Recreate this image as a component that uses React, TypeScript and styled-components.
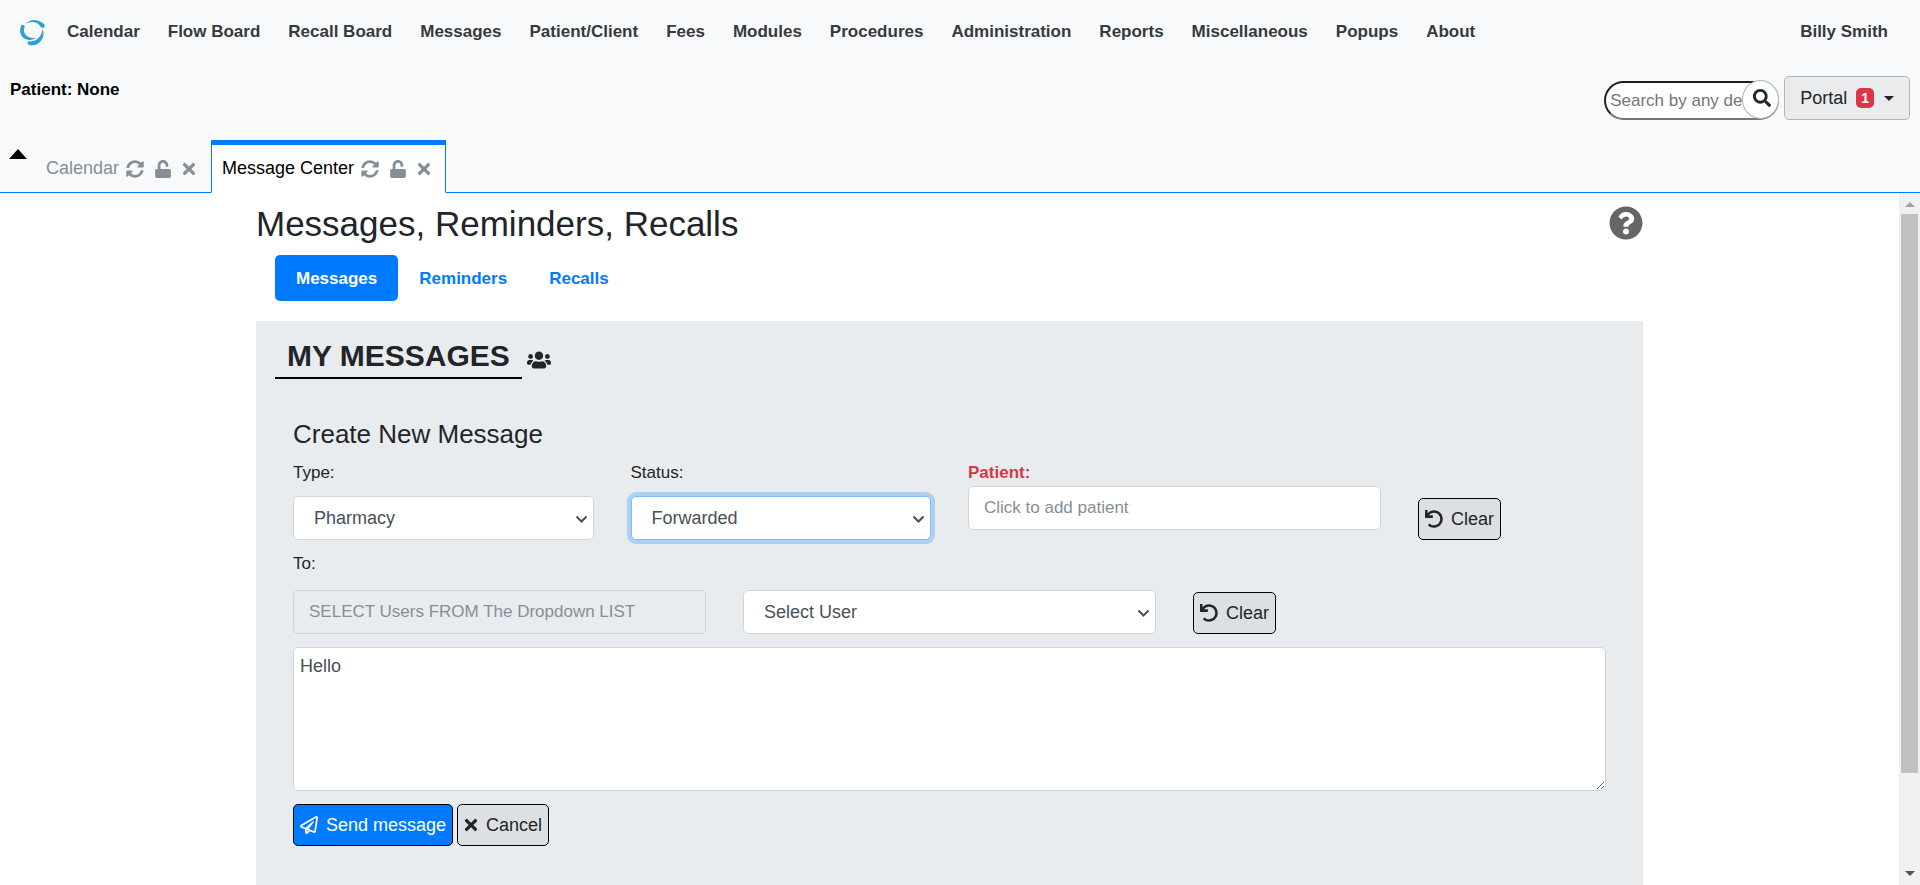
import React from 'react';
import styled, { createGlobalStyle, css } from 'styled-components';
import { FaSyncAlt, FaUnlock, FaTimes, FaSearch, FaQuestionCircle, FaUsers, FaUndo, FaRegPaperPlane } from 'react-icons/fa';

const Global = createGlobalStyle`
  *, *::before, *::after { box-sizing: border-box; }
  html, body, #root { height: 100%; }
  body {
    margin: 0;
    font: 18px/27px "Liberation Sans", Arial, sans-serif;
    color: #212529;
    background: #fff;
  }
  h1, h2, h3, p { margin: 0; font-weight: 400; }
  a { text-decoration: none; }
  button, input, select, textarea { font: inherit; margin: 0; }
`;

const Page = styled.div`
  height: 100vh;
  display: flex;
  flex-direction: column;
  overflow: hidden;
`;
const Header = styled.header`
  flex: none;
  background: #f8f9fa;
`;
const Nav = styled.nav`
  display: flex;
  align-items: center;
  gap: 21px;
  padding: 16px 32px 16px 19px;
`;
const NavItems = styled.div`
  display: flex;
  gap: 28px;
`;
const NavLink = styled.a`
  color: #343a40;
  font-size: 17px;
  font-weight: 700;
  line-height: 32px;
`;
const UserLink = styled(NavLink)`
  margin-left: auto;
`;
const PatientBar = styled.div`
  display: flex;
  justify-content: space-between;
  align-items: flex-start;
  padding: 12px 10px 0;
  height: 76px;
`;
const PatientName = styled.p`
  color: #000;
  font-size: 17px;
  font-weight: 700;
`;
const Tools = styled.div`
  display: flex;
  gap: 5px;
`;
const SearchForm = styled.form`
  display: flex;
  position: relative;
  width: 175px;
  height: 39px;
  margin-top: 5px;
`;
const SearchInput = styled.input`
  width: 100%;
  padding: 1px 34px 1px 4px;
  border: 2px inset #767676;
  border-radius: 20px;
  background: #fff;
  font-size: 17px;
  &::placeholder { color: #757575; opacity: 1; }
`;
const SearchButton = styled.button`
  position: absolute;
  top: -1px;
  right: 0;
  width: 37px;
  height: 39px;
  display: grid;
  place-items: center;
  padding: 0 0 3px 2px;
  border: 1px solid #adb5bd;
  border-radius: 50%;
  background: #fff;
  color: #212529;
`;
const PortalButton = styled.button`
  display: flex;
  align-items: center;
  height: 44px;
  padding: 0 15px;
  border: 1px solid #adb5bd;
  border-radius: 5px;
  background: #e9ebed;
  color: #212529;
`;
const Badge = styled.span`
  margin: 0 10px 0 9px;
  padding: 0 5px;
  border-radius: 5px;
  background: #dc3545;
  color: #fff;
  font-size: 14px;
  font-weight: 700;
  line-height: 20px;
`;
const Caret = styled.span`
  border: 5px solid transparent;
  border-top: 5px solid;
  border-bottom: 0;
`;
const Tabs = styled.div`
  display: flex;
  align-items: flex-start;
  border-bottom: 1px solid #007bff;
  height: 53px;
`;
const Collapse = styled.button`
  margin: 0 8px 0 9px;
  padding: 9px 0;
  border: 0;
  background: none;
  display: flex;
  &::before {
    content: "";
    border: 9px solid transparent;
    border-bottom: 10px solid #000;
    border-top: 0;
  }
`;
const Tab = styled.div<{ $active?: boolean }>`
  display: flex;
  align-items: center;
  gap: 7px;
  height: 53px;
  padding: 0 14px 0 10px;
  border: 1px solid transparent;
  border-top-width: 5px;
  color: #868e96;
  ${p => p.$active && css`
    border-color: #007bff;
    border-bottom-color: #fff;
    background: #fff;
    color: #000;
  `}
`;
const TabActions = styled.span`
  display: flex;
  gap: 11px;
`;
const TabAction = styled.button`
  display: flex;
  padding: 0;
  border: 0;
  background: none;
  color: #868e96;
`;
const UnlockIcon = styled(FaUnlock)`
  width: 16px;
  height: 18px;
`;
const CloseIcon = styled(FaTimes)`
  width: 14px;
  height: 18px;
`;
const Body = styled.div`
  flex: 1;
  min-height: 0;
  display: flex;
`;
const Content = styled.main`
  flex: 1;
  overflow: hidden;
  padding: 0 18px;
`;
const Container = styled.div`
  max-width: 1387px;
  min-height: 100%;
  margin: 0 auto;
  display: flex;
  flex-direction: column;
`;
const TitleRow = styled.div`
  display: flex;
  justify-content: space-between;
  align-items: flex-start;
  padding-top: 9px;
  height: 62px;
`;
const Title = styled.h1`
  font-size: 35px;
  line-height: 43px;
`;
const Help = styled.a`
  display: flex;
  margin-top: 4px;
  color: #676666;
`;
const Pills = styled.div`
  display: flex;
  padding-left: 19px;
  margin-bottom: 20px;
`;
const Pill = styled.a<{ $active?: boolean }>`
  padding: 10px 21px 9px;
  border-radius: 5px;
  font-size: 17px;
  font-weight: 700;
  color: ${p => (p.$active ? '#fff' : '#007bff')};
  background: ${p => (p.$active ? '#007bff' : 'transparent')};
`;
const Panel = styled.section`
  flex: 1;
  padding: 14px 37px 40px;
  background: #e9ecef;
`;
const PanelHead = styled.div`
  display: flex;
  align-items: center;
  gap: 5px;
  margin: 0 -18px;
`;
const PanelTitle = styled.h2`
  padding: 0 12px;
  border-bottom: 2px solid #000;
  font-size: 30px;
  font-weight: 700;
  line-height: 42px;
`;
const UsersButton = styled.button`
  display: flex;
  padding: 5px 0 0;
  border: 0;
  background: none;
  color: inherit;
`;
const FormTitle = styled.h3`
  margin: 38px 0 8px;
  font-size: 26px;
  line-height: 34px;
`;
const Grid = styled.div`
  display: grid;
  grid-template-columns: repeat(12, 1fr);
  column-gap: 37px;
  & + & { margin-top: 10px; }
`;
const Field = styled.div<{ $span: number; $gap?: number }>`
  grid-column: span ${p => p.$span};
  display: flex;
  flex-direction: column;
  align-items: ${p => (p.$span === 2 ? 'flex-start' : 'stretch')};
  gap: ${p => p.$gap || 0}px;
`;
const ClearField = styled(Field)`
  justify-content: flex-end;
`;
const Label = styled.label<{ $required?: boolean }>`
  ${p => p.$required && 'color: #dc3545; font-weight: 700;'}
  font-size: 17px;
`;
const control = css`
  width: 100%;
  height: 44px;
  border: 1px solid #ced4da;
  border-radius: 5px;
  background-color: #fff;
  color: #495057;
`;
const TextInput = styled.input`
  ${control}
  padding: 0 15px;
  font-size: 17px;
  &::placeholder { color: #868e96; opacity: 1; }
  &:disabled { background: #e9ecef; }
`;
const SelectWrap = styled.span`
  display: block;
  position: relative;
  svg {
    position: absolute;
    right: 6px;
    top: 19px;
    pointer-events: none;
  }
`;
const SelectBox = styled.select<{ $focused?: boolean }>`
  ${control}
  appearance: none;
  padding: 0 20px;
  ${p => p.$focused && 'border-color: #80bdff; box-shadow: 0 0 0 4px rgba(0, 123, 255, .25);'}
`;
const TextArea = styled.textarea`
  ${control}
  display: block;
  height: 144px;
  margin: 13px 0;
  padding: 5px 6px;
`;
const Button = styled.button<{ $primary?: boolean }>`
  display: flex;
  align-items: center;
  gap: 8px;
  height: 42px;
  padding: 0 6px;
  border: 1px solid #000;
  border-radius: 5px;
  background: ${p => (p.$primary ? '#007bff' : '#dde0e3')};
  color: ${p => (p.$primary ? '#fff' : '#212529')};
`;
const Actions = styled.div`
  display: flex;
  gap: 4px;
`;
const Scrollbar = styled.div`
  flex: none;
  width: 21px;
  display: flex;
  flex-direction: column;
  align-items: center;
  padding: 9px 2px;
  background: #f1f1f1;
`;
const Arrow = styled.span<{ $down?: boolean }>`
  border: 5px solid transparent;
  ${p => (p.$down
    ? 'border-top-color: #505050; border-bottom: 0;'
    : 'border-bottom-color: #a3a3a3; border-top: 0;')}
`;
const Track = styled.div`
  flex: 1;
  width: 100%;
  margin: 7px 0;
`;
const Thumb = styled.div`
  height: 86%;
  background: #c1c1c1;
`;

const menu = ['Calendar', 'Flow Board', 'Recall Board', 'Messages', 'Patient/Client', 'Fees', 'Modules',
  'Procedures', 'Administration', 'Reports', 'Miscellaneous', 'Popups', 'About'];

const Logo = () => (
  <svg width="27" height="27" viewBox="0 0 27 27" fill="#2f9fd4" aria-hidden="true">
    <path d="M6.5 5.5C9 2 13 .5 17 1.2c3.500.5 6 2.300 8.500 4.300.5 1.200 0 2.500-.7 3.300-1.300.4-2.300 0-3.300-1C19.500 3.500 12 .8 6.500 5.500z" />
    <path d="M2.500 6C4 5.700 5.500 6 5.800 7.500 3 13 6.500 19.500 17 19.300 12 21.800 7 21.500 4 18.500 1 15.500.2 9.500 2.500 6z" />
    <path d="M9 22.500C17 23 22.500 18.500 23.600 10c2.200 6 .4 12-5.600 15.200-2.500 1.300-6 1.500-8.500.5-1.200-.8-1.300-2.200-.5-3.200z" />
  </svg>
);

const Chevron = () => (
  <svg width="13" height="9" viewBox="0 0 13 9" fill="none" stroke="#495057" strokeWidth="2" aria-hidden="true">
    <path d="M1.5 1.5l5 5 5-5" />
  </svg>
);

const Select = ({ id, value, focused, label }: { id: string; value: string; focused?: boolean; label?: string }) => (
  <SelectWrap>
    <SelectBox id={id} $focused={focused} defaultValue={value} aria-label={label}>
      <option>{value}</option>
    </SelectBox>
    <Chevron />
  </SelectWrap>
);

const PageTab = ({ name, active }: { name: string; active?: boolean }) => (
  <Tab $active={active}>
    <span>{name}</span>
    <TabActions>
      <TabAction aria-label={`Refresh ${name}`}><FaSyncAlt size={18} /></TabAction>
      <TabAction aria-label={`Lock ${name}`}><UnlockIcon /></TabAction>
      <TabAction aria-label={`Close ${name}`}><CloseIcon /></TabAction>
    </TabActions>
  </Tab>
);

export default function App() {
  return (
    <Page>
      <Global />
      <Header>
        <Nav>
          <Logo />
          <NavItems>
            {menu.map(m => <NavLink href="#" key={m}>{m}</NavLink>)}
          </NavItems>
          <UserLink href="#">Billy Smith</UserLink>
        </Nav>
        <PatientBar>
          <PatientName>Patient: None</PatientName>
          <Tools>
            <SearchForm>
              <SearchInput aria-label="Search" placeholder="Search by any demographics" />
              <SearchButton type="button" aria-label="Search"><FaSearch size={18} /></SearchButton>
            </SearchForm>
            <PortalButton>Portal<Badge>1</Badge><Caret /></PortalButton>
          </Tools>
        </PatientBar>
        <Tabs>
          <Collapse aria-label="Collapse" />
          <PageTab name="Calendar" />
          <PageTab name="Message Center" active />
        </Tabs>
      </Header>
      <Body>
        <Content>
          <Container>
            <TitleRow>
              <Title>Messages, Reminders, Recalls</Title>
              <Help href="#" aria-label="Help"><FaQuestionCircle size={34} /></Help>
            </TitleRow>
            <Pills>
              <Pill href="#" $active>Messages</Pill>
              <Pill href="#">Reminders</Pill>
              <Pill href="#">Recalls</Pill>
            </Pills>
            <Panel>
              <PanelHead>
                <PanelTitle>MY MESSAGES</PanelTitle>
                <UsersButton type="button" aria-label="All users"><FaUsers size={24} /></UsersButton>
              </PanelHead>
              <FormTitle>Create New Message</FormTitle>
              <Grid>
                <Field $span={3} $gap={10}>
                  <Label htmlFor="type">Type:</Label>
                  <Select id="type" value="Pharmacy" />
                </Field>
                <Field $span={3} $gap={10}>
                  <Label htmlFor="status">Status:</Label>
                  <Select id="status" value="Forwarded" focused />
                </Field>
                <Field $span={4}>
                  <Label htmlFor="patient" $required>Patient:</Label>
                  <TextInput id="patient" placeholder="Click to add patient" />
                </Field>
                <ClearField $span={2}>
                  <Button type="button"><FaUndo size={18} />Clear</Button>
                </ClearField>
              </Grid>
              <Grid>
                <Field $span={4} $gap={13}>
                  <Label htmlFor="users">To:</Label>
                  <TextInput id="users" placeholder="SELECT Users FROM The Dropdown LIST" disabled />
                </Field>
                <ClearField $span={4}>
                  <Select id="user" value="Select User" label="Select User" />
                </ClearField>
                <ClearField $span={2}>
                  <Button type="button"><FaUndo size={18} />Clear</Button>
                </ClearField>
              </Grid>
              <TextArea aria-label="Message" defaultValue="Hello" />
              <Actions>
                <Button type="button" $primary><FaRegPaperPlane size={18} />Send message</Button>
                <Button type="button"><CloseIcon />Cancel</Button>
              </Actions>
            </Panel>
          </Container>
        </Content>
        <Scrollbar aria-hidden="true">
          <Arrow />
          <Track><Thumb /></Track>
          <Arrow $down />
        </Scrollbar>
      </Body>
    </Page>
  );
}
